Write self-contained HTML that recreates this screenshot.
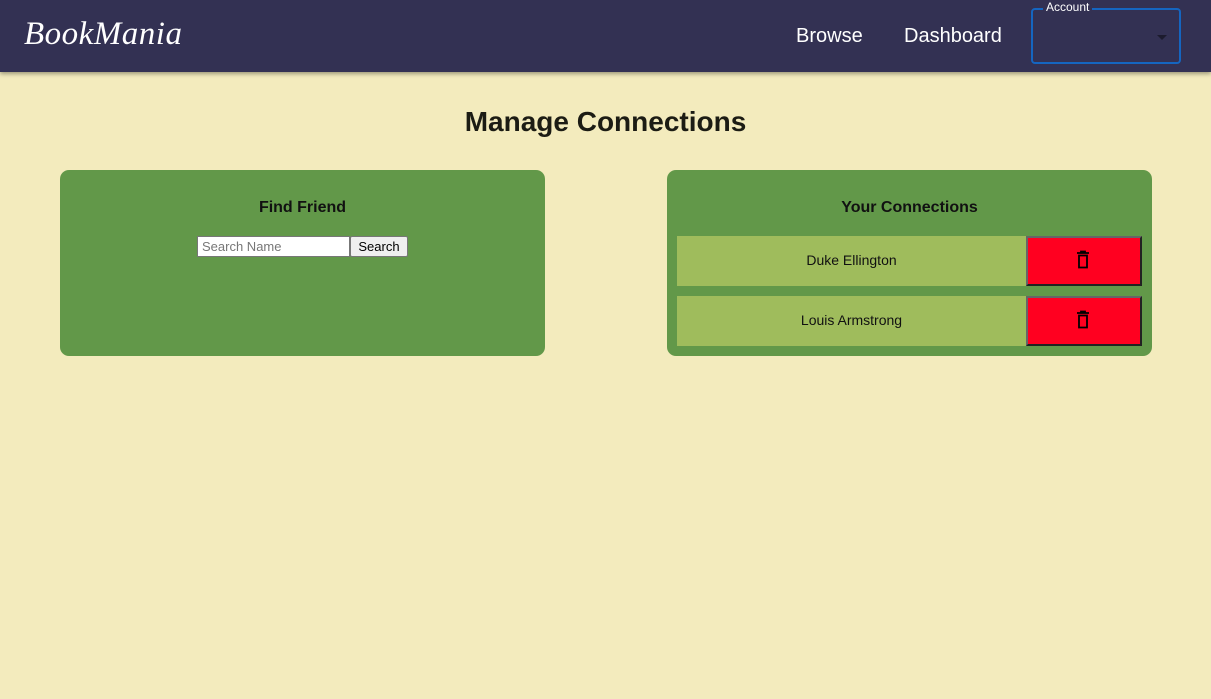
<!DOCTYPE html>
<html><head><style>
*{box-sizing:border-box;margin:0;padding:0}
body{width:1211px;height:699px;background:#f3ebbd;font-family:"Liberation Sans",sans-serif;position:relative;overflow:hidden}
.nav{position:absolute;left:0;top:0;width:1211px;height:72px;background:#333153;box-shadow:0 2px 4px rgba(0,0,0,.35)}
.logo{position:absolute;left:24px;top:16px;font-family:"Liberation Serif",serif;font-style:italic;font-size:33px;color:#fff;letter-spacing:0.5px}
.nl{position:absolute;top:25px;color:#fff;font-size:20px}
.acc{position:absolute;left:1031px;top:8px;width:150px;height:56px;border:2px solid #1565c0;border-radius:4px}
.acc span{position:absolute;left:10px;top:-10px;background:#333153;color:#fff;font-size:12px;padding:0 3px}
.acc i{position:absolute;left:124px;top:25px;border-left:5px solid transparent;border-right:5px solid transparent;border-top:5px solid #1c1b2e}
h1{position:absolute;top:106px;width:1211px;text-align:center;font-size:28px;color:#1c1c14}
.card{position:absolute;top:170px;width:485px;height:186px;background:#629849;border-radius:9px}
.card h2{position:absolute;top:29px;width:100%;text-align:center;font-size:16px;color:#111}
.inp{position:absolute;left:137px;top:66px;width:153px;height:21px;background:#fff;border:1px solid #777;font-size:13px;color:#777;padding:2px 4px}
.btn{position:absolute;left:290px;top:66px;width:58px;height:21px;background:#efefef;border:1px solid #777;border-radius:2px;font-size:13px;text-align:center;line-height:19px}
.row{position:absolute;left:10px;width:349px;height:50px;background:#9fbc5c;font-size:14px;text-align:center;line-height:48px;color:#111}
.del{position:absolute;left:359px;width:116px;height:50px;background:#ff0020;border:2px solid;border-color:#666 #222 #222 #666}
.del svg{position:absolute;left:47px;top:12px}
</style></head><body>
<div class="nav">
<div class="logo">BookMania</div>
<div class="nl" style="left:796px">Browse</div>
<div class="nl" style="left:904px">Dashboard</div>
<div class="acc"><span>Account</span><i></i></div>
</div>
<h1>Manage Connections</h1>
<div class="card" style="left:60px"><h2>Find Friend</h2>
<div class="inp">Search Name</div><div class="btn">Search</div></div>
<div class="card" style="left:667px"><h2>Your Connections</h2>
<div class="row" style="top:66px">Duke Ellington</div>
<div class="del" style="top:66px"><svg width="16" height="20" viewBox="0 0 16 20"><path d="M2 3h12M6 3V1.5h4V3M4 5.5h8v12H4z" fill="none" stroke="#000" stroke-width="1.8"/></svg></div>
<div class="row" style="top:126px">Louis Armstrong</div>
<div class="del" style="top:126px"><svg width="16" height="20" viewBox="0 0 16 20"><path d="M2 3h12M6 3V1.5h4V3M4 5.5h8v12H4z" fill="none" stroke="#000" stroke-width="1.8"/></svg></div>
</div>
</body></html>
